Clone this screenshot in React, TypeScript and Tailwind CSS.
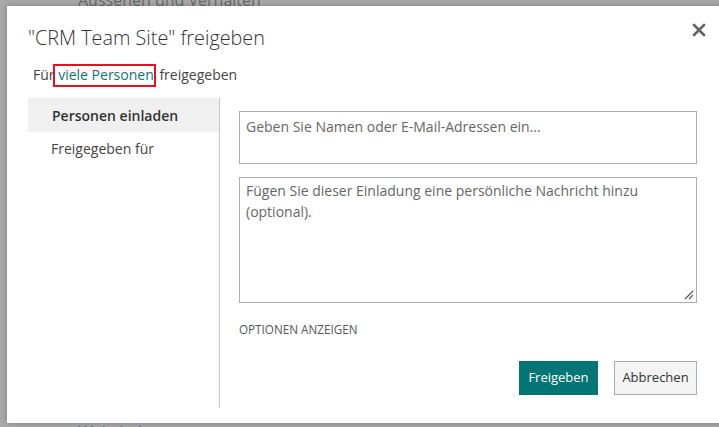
import { X } from "lucide-react";

const font = { fontFamily: '"Open Sans", "Noto Sans", sans-serif' };

export default function App() {
  return (
    <div className="relative h-[427px] w-[719px] overflow-hidden bg-[#a9a9a9]" style={font}>
      {/* page behind the overlay */}
      <div className="flex h-full flex-col justify-between pl-[78px] text-[16px]">
        <p className="-mt-[12px] text-[#6a6a6a]">Aussehen und Verhalten</p>
        <p className="-mb-[17px] text-[#3b6f73]">Websitebenutzer</p>
      </div>

      {/* dialog */}
      <div className="absolute left-[7px] top-[6px] flex h-[417px] w-[730px] flex-col bg-white shadow-[0_0_6px_rgba(0,0,0,0.25)]">
        <div className="flex items-start justify-between pl-[21px] pr-[28px] pt-[17px]">
          <h1 className="mt-[1px] text-[19.8px] font-light leading-[28px] text-[#333]">"CRM Team Site" freigeben</h1>
          <button className="-mt-[3px] text-[#666]">
            <X className="h-[20px] w-[20px]" strokeWidth={3.2} />
          </button>
        </div>

        <p className="mt-[13px] pl-[26px] text-[14px] leading-[20px] text-[#444]">
          Für{" "}
          <span className="relative text-[#0c7474]">
            viele Personen
            <span className="absolute -bottom-[3px] -left-[5px] -right-[2px] -top-[1px] border-2 border-[#e3121e]" />
          </span>{" "}
          <span className="ml-[2px]">freigegeben</span>
        </p>

        <div className="mt-[13px] flex flex-1 pb-[15px] pl-[21px]">
          <nav className="flex w-[192px] flex-col border-r border-[#c8c8c8] text-[14px]">
            <div className="flex h-[34px] items-center bg-[#f0f0f0] pl-[24px] font-semibold text-[#333]">
              Personen einladen
            </div>
            <div className="flex h-[32px] items-center pl-[23px] text-[#444]">Freigegeben für</div>
          </nav>

          <div className="flex w-[477px] flex-col pl-[19px] pt-[13px]">
            <div className="h-[53px] w-[458px] border border-[#ababab] px-[6px] py-[5px] text-[14px] leading-[20px] text-[#666]">
              Geben Sie Namen oder E-Mail-Adressen ein...
            </div>
            <div className="relative mt-[13px] h-[126px] w-[458px] border border-[#ababab] px-[6px] py-[2px] text-[14px] leading-[21px] text-[#666]">
              Fügen Sie dieser Einladung eine persönliche Nachricht hinzu (optional).
              <svg className="absolute bottom-[2px] right-[2px]" width="10" height="10" viewBox="0 0 10 10">
                <path d="M1 9 L9 1 M5 9 L9 5" stroke="#555" strokeWidth="1.2" />
              </svg>
            </div>
            <p className="mt-[18px] text-[11.7px] uppercase leading-[16px] text-[#555]">
              Optionen anzeigen
            </p>
            <div className="mt-[24px] flex justify-end gap-[16px]">
              <button className="h-[34px] w-[79px] bg-[#037575] text-[13px] text-white">Freigeben</button>
              <button className="h-[34px] w-[83px] border border-[#ababab] bg-[#f4f4f4] text-[13px] text-[#333]">
                Abbrechen
              </button>
            </div>
          </div>
        </div>
      </div>
    </div>
  );
}
